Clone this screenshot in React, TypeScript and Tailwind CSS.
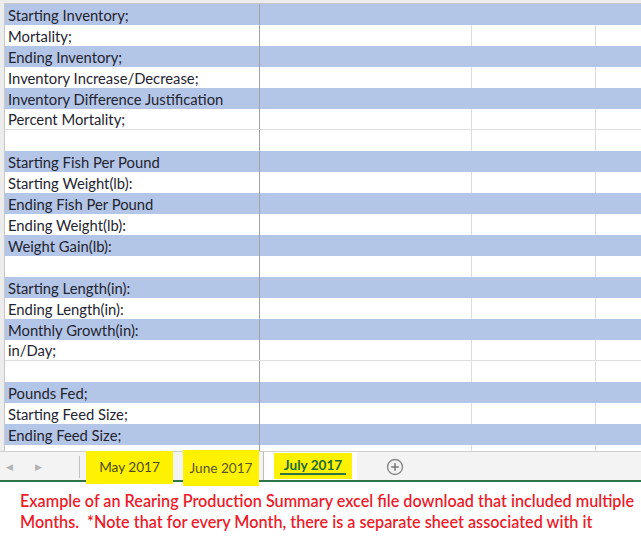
import React from 'react';

type Row = { label: string; blue: boolean };

const rows: Row[] = [
  { label: 'Starting Inventory;', blue: true },
  { label: 'Mortality;', blue: false },
  { label: 'Ending Inventory;', blue: true },
  { label: 'Inventory Increase/Decrease;', blue: false },
  { label: 'Inventory Difference Justification', blue: true },
  { label: 'Percent Mortality;', blue: false },
  { label: '', blue: false },
  { label: 'Starting Fish Per Pound', blue: true },
  { label: 'Starting Weight(lb):', blue: false },
  { label: 'Ending Fish Per Pound', blue: true },
  { label: 'Ending Weight(lb):', blue: false },
  { label: 'Weight Gain(lb):', blue: true },
  { label: '', blue: false },
  { label: 'Starting Length(in):', blue: true },
  { label: 'Ending Length(in):', blue: false },
  { label: 'Monthly Growth(in):', blue: true },
  { label: 'in/Day;', blue: false },
  { label: '', blue: false },
  { label: 'Pounds Fed;', blue: true },
  { label: 'Starting Feed Size;', blue: false },
  { label: 'Ending Feed Size;', blue: true },
];

const SheetRow = ({ row, nextWhite }: { row: Row; nextWhite: boolean }) => {
  const line = !row.blue && nextWhite ? 'border-b border-[#dedede]' : '';
  const bg = row.blue ? 'bg-[#b4c6e7]' : 'bg-white';
  const grid = row.blue ? 'border-transparent' : 'border-[#dcdcdc]';
  return (
    <div className={`flex h-[21px] ${bg} ${line}`}>
      <div className="w-[255px] pl-[3px] pt-px flex items-center text-[14.8px] text-[#1f2430] border-r border-[#a3a3a3] whitespace-nowrap">
        {row.label}
      </div>
      <div className={`w-[212px] border-r ${grid}`} />
      <div className={`w-[124px] border-r ${grid}`} />
      <div className="flex-1" />
    </div>
  );
};

const PlusCircle = () => (
  <svg width="18" height="18" viewBox="0 0 18 18">
    <circle cx="9" cy="9" r="7.5" fill="none" stroke="#8a8a8a" strokeWidth="1.4" />
    <path d="M9 5.2v7.6M5.2 9h7.6" stroke="#7a7a7a" strokeWidth="1.6" />
  </svg>
);

export default function App() {
  return (
    <div
      className="w-[641px] h-[538px] bg-white overflow-hidden"
      style={{ fontFamily: 'Lato, "Open Sans", sans-serif' }}
    >
      <div className="pt-[3px] bg-[#ececec]">
        <div className="ml-[4px] border-l border-t border-[#c8c8c8] bg-white">
          {rows.map((r, i) => (
            <SheetRow key={i} row={r} nextWhite={i + 1 < rows.length && !rows[i + 1].blue} />
          ))}
          <div className="flex h-[6px] bg-white">
            <div className="w-[255px] border-r border-[#a3a3a3]" />
            <div className="w-[212px] border-r border-[#dcdcdc]" />
            <div className="w-[124px] border-r border-[#dcdcdc]" />
          </div>
        </div>
      </div>

      <div className="relative h-[31px] bg-[#f3f3f3] border-t border-[#cfcfcf] flex items-stretch text-[13.6px]">
        <div className="absolute left-0 right-0 bottom-0 h-[2px] bg-[#2f7449]" />
        <div className="flex items-center gap-[22px] pl-[6px] w-[79px] text-[#b3b3b3] text-[9px]">
          <span>◀</span>
          <span>▶</span>
        </div>
        <div className="w-px bg-[#c3c3c3] my-[4px]" />
        <div className="ml-[6px] z-10 -mt-px -mb-[2px] w-[87px] bg-[#fff200] flex items-center justify-center text-[#4e4a1e]">
          May 2017
        </div>
        <div className="ml-[10px] z-10 -mt-[2px] -mb-[4px] w-[76px] bg-[#fff200] flex items-center justify-center text-[#5a5530]">
          June 2017
        </div>
        <div className="ml-[4px] mb-[2px] w-[94px] bg-white border-l border-[#bdbdbd] flex items-stretch pl-[10px] z-10">
          <div className="w-[78px] bg-[#fff200] my-[1px] flex flex-col items-center justify-center">
            <span className="font-bold text-[#1d6b3a] leading-[16px] border-b-2 border-[#2f7449] px-[4px]">
              July 2017
            </span>
          </div>
        </div>
        <div className="ml-[29px] flex items-center">
          <PlusCircle />
        </div>
      </div>

      <div className="pl-[20px] pt-[8px] text-[16.2px] leading-[21px] text-[#ec1c2b] font-semibold whitespace-nowrap">
        <div>Example of an Rearing Production Summary excel file download that included multiple</div>
        <div>Months.&nbsp;&nbsp;*Note that for every Month, there is a separate sheet associated with it</div>
      </div>
    </div>
  );
}
